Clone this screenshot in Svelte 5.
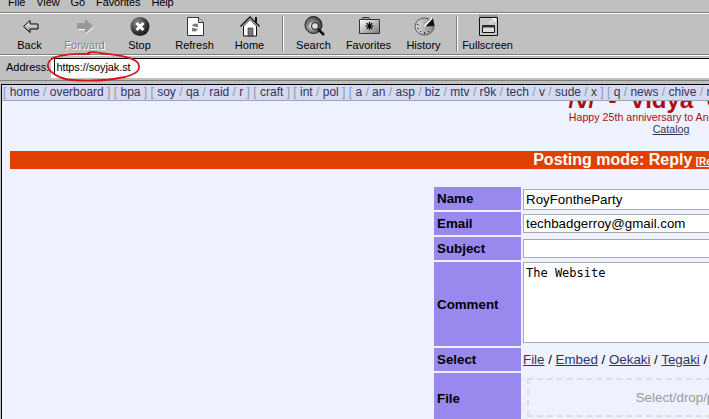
<script>
	const fields = [
		{ label: 'Name', value: 'RoyFontheParty' },
		{ label: 'Email', value: 'techbadgerroy@gmail.com' },
		{ label: 'Subject', value: '' }
	];
	const navGroups = [
		['home', 'overboard'],
		['bpa'],
		['soy', 'qa', 'raid', 'r'],
		['craft'],
		['int', 'pol'],
		['a', 'an', 'asp', 'biz', 'mtv', 'r9k', 'tech', 'v', 'sude', 'x'],
		['q', 'news', 'chive', 'rules']
	];
	const selectLinks = ['File', 'Embed', 'Oekaki', 'Tegaki', 'Draw'];
</script>

{#snippet tool(label, disabled = false)}
	<div class="tool" class:disabled>
		{#if label === 'Back'}
			<svg viewBox="0 0 24 24" width="24" height="24">
				<defs>
					<linearGradient id="backFill" x1="0" y1="0" x2="0" y2="1">
						<stop offset="0" stop-color="#fff" />
						<stop offset="1" stop-color="#8a8a8a" />
					</linearGradient>
				</defs>
				<path d="M5.5 11.5 12 5.5v3.5h8v5h-8v3.5z" fill="url(#backFill)" stroke="#000" />
			</svg>
		{:else if label === 'Forward'}
			<svg viewBox="0 0 24 24" width="24" height="24">
				<path d="M5 15h8v4l8-7-1 0-7 6v-4H5z" fill="#fff" />
				<path d="M4 8h8V4l8 7-8 7v-4H4z" fill="#989898" />
			</svg>
		{:else if label === 'Stop'}
			<svg viewBox="0 0 24 24" width="24" height="24">
				<defs>
					<radialGradient id="stopFill" cx="0.35" cy="0.3" r="0.8">
						<stop offset="0" stop-color="#8a8a8a" />
						<stop offset="0.6" stop-color="#3a3a3a" />
						<stop offset="1" stop-color="#111" />
					</radialGradient>
				</defs>
				<circle cx="12" cy="11.5" r="9.5" fill="url(#stopFill)" />
				<path d="M8.5 8 15.5 15M15.5 8 8.5 15" stroke="#fff" stroke-width="3" />
			</svg>
		{:else if label === 'Refresh'}
			<svg viewBox="0 0 24 24" width="24" height="24">
				<path d="M4.5 2.5h11l5 5v13h-16z" fill="#fff" stroke="#333" />
				<path d="M15.5 2.5v5h5" fill="#ccc" stroke="#333" />
				<path d="M9 10.5a3.5 3.5 0 0 1 5-1.5l1-1v4h-4l1-1a2 2 0 0 0-2 .5zM15 14a3.5 3.5 0 0 1-5 2l-1 1v-4h4l-1 1a2 2 0 0 0 2-.5z" fill="#808080" />
			</svg>
		{:else if label === 'Home'}
			<svg viewBox="0 0 24 24" width="24" height="24">
				<path d="M17 2h2v7h-2z" fill="#111" />
				<path d="M2.5 11.5 12 2l9.5 9.5" fill="#fff" stroke="#111" stroke-width="1.5" />
				<path d="M5.5 11 12 4.5l6.5 6.5v10h-13z" fill="#fff" stroke="#111" />
				<path d="M10 13h5v8h-5z" fill="#777" stroke="#222" stroke-width="0.6" />
			</svg>
		{:else if label === 'Search'}
			<svg viewBox="0 0 24 24" width="24" height="24">
				<defs>
					<radialGradient id="searchFill" cx="0.4" cy="0.55" r="0.6">
						<stop offset="0" stop-color="#f4f4f4" />
						<stop offset="0.4" stop-color="#999" />
						<stop offset="1" stop-color="#333" />
					</radialGradient>
				</defs>
				<circle cx="11.5" cy="10" r="8.5" fill="url(#searchFill)" stroke="#222" />
				<path d="M4 8q4-5 8-2-5 0-6 5z" fill="#777" />
				<circle cx="13" cy="11" r="3.5" fill="#ddd" stroke="#111" />
				<path d="M16 14l6 6" stroke="#111" stroke-width="2.5" />
			</svg>
		{:else if label === 'Favorites'}
			<svg viewBox="0 0 24 24" width="24" height="24">
				<defs>
					<linearGradient id="favFill" x1="0" y1="0" x2="1" y2="1">
						<stop offset="0" stop-color="#fff" />
						<stop offset="1" stop-color="#777" />
					</linearGradient>
				</defs>
				<path d="M4.5 4.5 6 2.5h6l1.5 2z" fill="#aaa" stroke="#333" />
				<path d="M2.5 4.5h20v14h-20z" fill="url(#favFill)" stroke="#333" />
				<path d="M12.5 7v8M8.5 11h8M9.7 8.2l5.6 5.6M15.3 8.2l-5.6 5.6" stroke="#000" stroke-width="1.2" />
			</svg>
		{:else if label === 'History'}
			<svg viewBox="0 0 24 24" width="24" height="24">
				<defs>
					<linearGradient id="histFill" x1="0" y1="0" x2="1" y2="0">
						<stop offset="0" stop-color="#ddd" />
						<stop offset="1" stop-color="#888" />
					</linearGradient>
				</defs>
				<ellipse cx="12.5" cy="11.5" rx="9.5" ry="8.5" fill="url(#histFill)" stroke="#555" />
				<path d="M12.5 11.5 21 3l1.5 8z" fill="#111" />
				<path d="M12.5 11.5 20 3" stroke="#fff" stroke-width="1.5" />
				<path d="M5 13l2 1M8 17l1-1M12.5 19v-2M17 17l-1-1M4.5 9l2 1" stroke="#333" />
			</svg>
		{:else}
			<svg viewBox="0 0 24 24" width="24" height="24">
				<path d="M3 1h18" stroke="#888" stroke-width="1.5" />
				<path d="M3.5 2.5h18v18h-18z" fill="#c8c8c8" stroke="#111" />
				<path d="M6.5 10.5h12v7h-12z" fill="#ddd" stroke="#111" />
				<path d="M6.5 10.5h12v2h-12z" fill="#333" />
				<path d="M14 8l5-4M16 3.5h3.5V7" stroke="#fff" stroke-width="1" fill="none" />
			</svg>
		{/if}
		<span>{label}</span>
	</div>
{/snippet}

<div class="browser">
	<div class="menu">
		<span>File</span><span>View</span><span>Go</span><span>Favorites</span><span>Help</span>
	</div>

	<div class="toolbar">
		{@render tool('Back')}
		{@render tool('Forward', true)}
		{@render tool('Stop')}
		{@render tool('Refresh')}
		{@render tool('Home')}
		<i class="sep"></i>
		{@render tool('Search')}
		{@render tool('Favorites')}
		{@render tool('History')}
		<i class="sep"></i>
		{@render tool('Fullscreen')}
	</div>

	<div class="address">
		<label for="url">Address:</label>
		<div class="url" id="url"><b class="caret"></b>https://soyjak.st</div>
		<svg class="scribble" viewBox="0 0 100 36" width="100" height="36">
			<path d="M8 10C24 5 34 6 46 6c-6-1 2-3 10-1 14 2 32 3 38 10 4 8-3 11-13 14-18 4-38 4-53 3C16 31 6 25 4 19 3 15 6 11 12 9" fill="none" stroke="#d4151c" stroke-width="1.8" />
		</svg>
	</div>

	<div class="viewport">
		<div class="page">
			<nav class="boardlist">
				{#each navGroups as group}
					<span class="group">[ {#each group as board, i}{#if i > 0}{' / '}{/if}<a href="#top">{board}</a>{/each} ]</span>{' '}
				{/each}
			</nav>

			<header class="board-head">
				<h1>/v/ - Vidya Games</h1>
				<p class="subtitle">Happy 25th anniversary to Animal Crossing</p>
				<a class="catalog" href="#top">Catalog</a>
			</header>

			<div class="mode">
				<strong>Posting mode: Reply</strong>
				<small>[<a href="#top">Return</a>] [<a href="#top">Go to bottom</a>]</small>
			</div>

			<table class="post-form">
				<tbody>
					{#each fields as field}
						<tr>
							<th>{field.label}</th>
							<td><div class="input">{field.value}</div></td>
						</tr>
					{/each}
					<tr>
						<th class="tall">Comment</th>
						<td class="top"><div class="textarea">The Website</div></td>
					</tr>
					<tr>
						<th>Select</th>
						<td class="select">
							{#each selectLinks as link, i}{#if i > 0}{' / '}{/if}<a href="#top">{link}</a>{/each}
						</td>
					</tr>
					<tr>
						<th>File</th>
						<td><div class="drop">Select/drop/paste files here</div></td>
					</tr>
				</tbody>
			</table>
		</div>
	</div>
</div>

<style>
	:global(body) {
		margin: 0;
		background: #c0c0c0;
		font-family: 'Liberation Sans', Arial, sans-serif;
	}

	.browser {
		width: 709px;
		height: 419px;
		overflow: hidden;
		display: flex;
		flex-direction: column;
		background: #c0c0c0;
		font-size: 11px;
		color: #000;
	}

	.menu {
		height: 12px;
		flex: none;
		display: flex;
		gap: 11px;
		padding-left: 8px;
		line-height: 4px;
		letter-spacing: -0.1px;
		overflow: hidden;
		border-bottom: 1px solid #808080;
	}

	.toolbar {
		height: 40px;
		flex: none;
		display: flex;
		align-items: stretch;
		padding-left: 2px;
		border-top: 1px solid #fff;
		border-bottom: 1px solid #808080;
		box-shadow: 0 1px 0 #fff;
	}

	.tool {
		width: 55px;
		flex: none;
		display: flex;
		flex-direction: column;
		align-items: center;
		padding-top: 1px;
		box-sizing: border-box;
		line-height: 13px;
		font-size: 11px;
	}

	.tool svg {
		display: block;
		height: 24px;
	}

	.tool.disabled span {
		color: #808080;
		text-shadow: 1px 1px 0 #fff;
	}

	.sep {
		width: 1px;
		flex: none;
		margin: 2px 3px 0 5px;
		height: 36px;
		background: #808080;
		box-shadow: 1px 0 0 #fff;
	}

	.address {
		position: relative;
		height: 24px;
		flex: none;
		margin-top: 2px;
		display: flex;
		align-items: flex-start;
		padding-left: 6px;
		border-bottom: 1px solid #808080;
		box-sizing: border-box;
	}

	.address label {
		line-height: 16px;
		margin-top: 2px;
	}

	.url {
		flex: 1;
		height: 20px;
		margin: 1px 0 0 2px;
		background: #fff;
		border-top: 1px solid #000;
		box-sizing: border-box;
		display: flex;
		align-items: flex-start;
		padding-left: 3px;
		line-height: 16px;
		letter-spacing: -0.1px;
	}

	.caret {
		width: 1px;
		height: 15px;
		background: #000;
		margin-right: 1px;
	}

	.scribble {
		position: absolute;
		left: 44px;
		top: -9px;
	}

	.viewport {
		flex: 1;
		min-height: 0;
		margin-top: 3px;
		overflow: hidden;
		border-top: 1px solid #000;
		border-left: 1px solid #000;
		margin-left: 1px;
	}

	.page {
		width: 1338px;
		min-height: 100%;
		background: #eef2ff;
		color: #000;
		font-size: 12px;
	}

	.boardlist {
		position: relative;
		z-index: 1;
		height: 15px;
		padding-left: 1px;
		background: #d6daf0;
		border-bottom: 1px solid #a0a4b8;
		color: #89a;
		line-height: 15px;
		white-space: nowrap;
		font-size: 12px;
	}

	.boardlist a {
		color: #34345c;
		text-decoration: none;
	}

	.board-head {
		display: flow-root;
		height: 50px;
		text-align: center;
		color: #af0a0f;
	}

	h1 {
		margin: -15px 0 0;
		padding-left: 13px;
		height: 27px;
		font: bold 24px/27px 'Liberation Sans', Arial, sans-serif;
		word-spacing: 6.5px;
	}

	.subtitle {
		margin: -2px 0 0;
		line-height: 12px;
		font-size: 10.67px;
	}

	.catalog {
		display: block;
		line-height: 12px;
		font-size: 10.67px;
		color: #34345c;
	}

	.mode {
		height: 18px;
		margin: 0 10px 0 8px;
		background: #e04000;
		color: #fff;
		text-align: center;
		line-height: 18px;
	}

	.mode strong {
		font-size: 16px;
	}

	.mode small {
		font-size: 10px;
		font-weight: bold;
	}

	.mode a {
		color: #fff;
	}

	.post-form {
		width: 474px;
		margin: 16px auto 0;
		border-spacing: 2px;
		border-collapse: separate;
		table-layout: fixed;
		position: relative;
		left: -2px;
	}

	th {
		width: 87px;
		padding: 0 0 0 3px;
		box-sizing: border-box;
		background: #9988ee;
		font-size: 13.33px;
		text-align: left;
		height: 23px;
	}

	th.tall {
		height: 84px;
	}

	td {
		padding: 0;
		font-size: 13.33px;
	}

	td.top {
		vertical-align: top;
	}

	.input {
		height: 19px;
		border: 1px solid #aaa;
		background: #fff;
		padding-left: 2px;
		box-sizing: border-box;
		line-height: 17px;
	}

	tr:first-child .input {
		height: 21px;
		line-height: 19px;
		margin-top: 2px;
	}

	.textarea {
		height: 81px;
		border: 1px solid #aaa;
		background: #fff;
		padding: 3px 2px;
		box-sizing: border-box;
		font: 12px/14px 'DejaVu Sans Mono', monospace;
	}

	.select {
		height: 23px;
		color: #000;
	}

	.select a {
		color: #34345c;
	}

	.drop {
		height: 39px;
		margin: 5px 4px 6px;
		padding-left: 6px;
		box-sizing: border-box;
		border: 2px dashed #ddd;
		color: #999;
		text-align: center;
		line-height: 35px;
		font-size: 13.33px;
	}
</style>
